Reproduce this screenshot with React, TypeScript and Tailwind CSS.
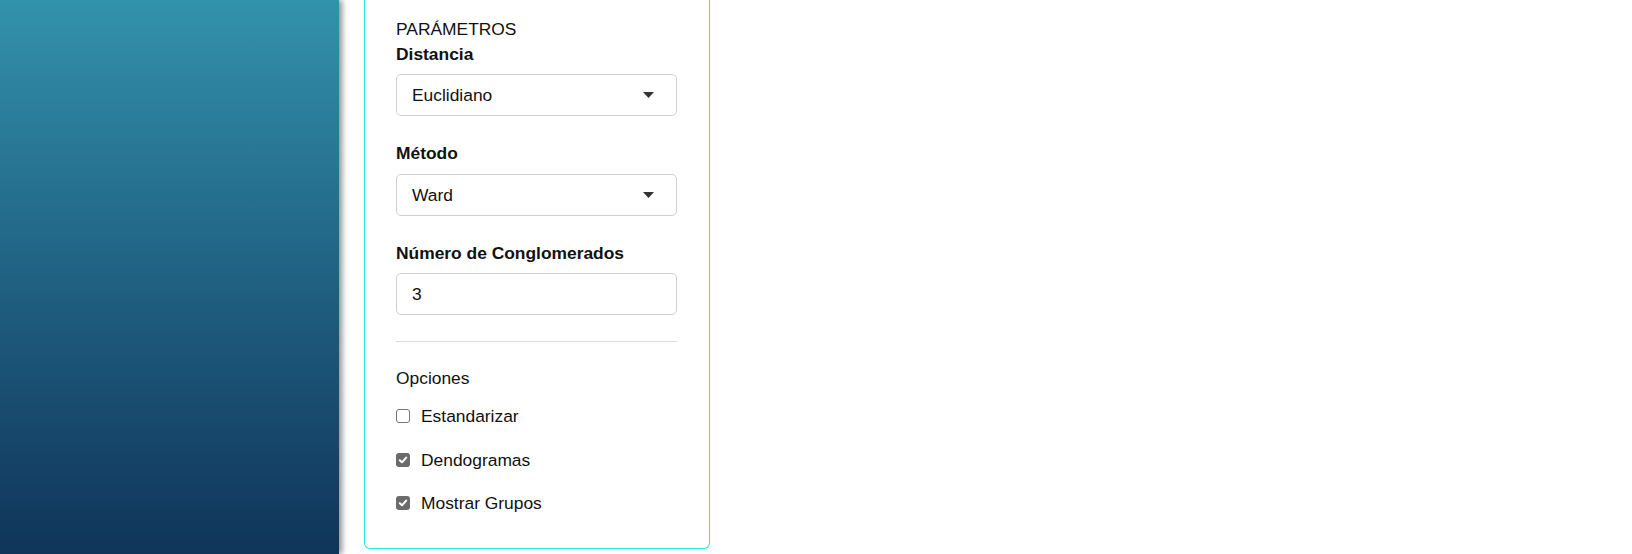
import React from 'react';

function Select({ value }: { value: string }) {
    return (
        <div className="flex items-center justify-between h-[42px] w-full border border-[#cfcfcf] rounded-[5px] bg-white pl-[15px] pr-[22px]">
            <span>{value}</span>
            <svg width="11" height="6" viewBox="0 0 11 6" className="text-[#333]">
                <path d="M0 0 L11 0 L5.5 6 Z" fill="currentColor" />
            </svg>
        </div>
    );
}

function Check({ label, checked, className }: { label: string; checked?: boolean; className?: string }) {
    return (
        <div className={`flex items-center h-[20px] ${className ?? ''}`}>
            {checked ? (
                <span className="w-[14px] h-[14px] rounded-[3px] bg-[#6b6b6b] flex items-center justify-center">
                    <svg width="10" height="10" viewBox="0 0 10 10">
                        <path d="M1.8 5.2 L4 7.3 L8.2 2.6" stroke="white" strokeWidth="2" fill="none" strokeLinecap="round" strokeLinejoin="round" />
                    </svg>
                </span>
            ) : (
                <span className="w-[14px] h-[14px] rounded-[3px] border border-[#767676] bg-white" />
            )}
            <span className="ml-[11px]">{label}</span>
        </div>
    );
}

export default function App() {
    return (
        <div className="flex h-[554px] w-full bg-white overflow-hidden text-[#111] text-[17.4px] leading-[20px] font-['Liberation_Sans',Arial,sans-serif]">
            {/* Sidebar */}
            <aside className="w-[339px] shrink-0 relative z-10 bg-gradient-to-b from-[#3392ac] to-[#10345a] shadow-[3px_0_6px_rgba(0,0,0,0.45)]" />

            {/* Main */}
            <main className="pl-[25px]">
                <div className="w-[346px] border border-t-0 border-[#22f0d4] rounded-b-[6px] pl-[31px] pr-8 pt-[19px] pb-[35px] bg-white">
                    <p>PARÁMETROS</p>
                    <p className="mt-[5px] font-bold">Distancia</p>
                    <div className="mt-[10px]"><Select value="Euclidiano" /></div>

                    <p className="mt-[27px] font-bold">Método</p>
                    <div className="mt-[11px]"><Select value="Ward" /></div>

                    <p className="mt-[27px] font-bold">Número de Conglomerados</p>
                    <div className="mt-[10px] h-[42px] w-full border border-[#cfcfcf] rounded-[5px] flex items-center pl-[15px]">
                        3
                    </div>

                    <hr className="mt-[26px] border-t border-[#dcdcdc]" />

                    <p className="mt-[26px]">Opciones</p>
                    <Check className="mt-[18px]" label="Estandarizar" />
                    <Check className="mt-[24px]" label="Dendogramas" checked />
                    <Check className="mt-[23px]" label="Mostrar Grupos" checked />
                </div>
            </main>
        </div>
    );
}
